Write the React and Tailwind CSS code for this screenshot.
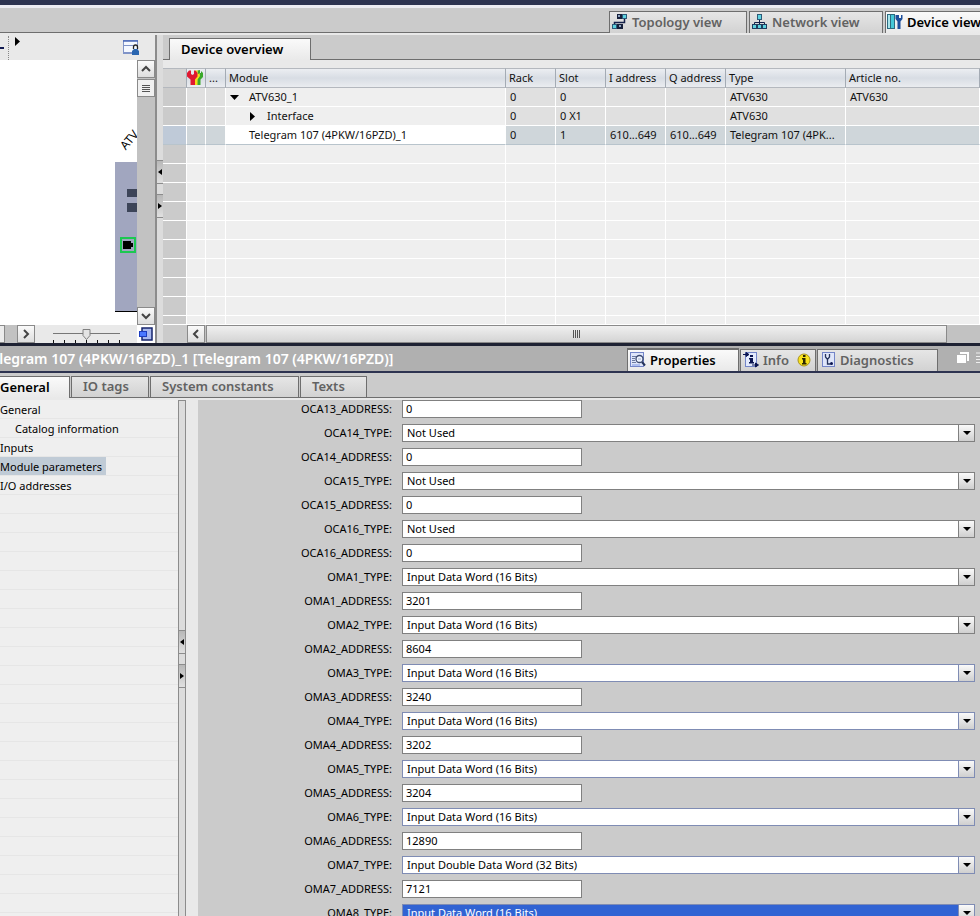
import { useState } from 'react';
import clsx from 'clsx';

const MODULES = [
  { name: 'ATV630_1', level: 0, arrow: 'down', rack: '0', slot: '0', i: '', q: '', type: 'ATV630', article: 'ATV630' },
  { name: 'Interface', level: 1, arrow: 'right', rack: '0', slot: '0 X1', i: '', q: '', type: 'ATV630', article: '' },
  {
    name: 'Telegram 107 (4PKW/16PZD)_1',
    level: 0,
    rack: '0',
    slot: '1',
    i: '610...649',
    q: '610...649',
    type: 'Telegram 107 (4PK...',
    article: '',
  },
];

const TYPES = ['Not Used', 'Input Data Word (16 Bits)', 'Input Double Data Word (32 Bits)'];

const PARAMETERS = [
  { name: 'OCA13_ADDRESS', value: '0' },
  { name: 'OCA14_TYPE', value: TYPES[0] },
  { name: 'OCA14_ADDRESS', value: '0' },
  { name: 'OCA15_TYPE', value: TYPES[0] },
  { name: 'OCA15_ADDRESS', value: '0' },
  { name: 'OCA16_TYPE', value: TYPES[0] },
  { name: 'OCA16_ADDRESS', value: '0' },
  { name: 'OMA1_TYPE', value: TYPES[1] },
  { name: 'OMA1_ADDRESS', value: '3201' },
  { name: 'OMA2_TYPE', value: TYPES[1] },
  { name: 'OMA2_ADDRESS', value: '8604' },
  { name: 'OMA3_TYPE', value: TYPES[1], touched: true },
  { name: 'OMA3_ADDRESS', value: '3240' },
  { name: 'OMA4_TYPE', value: TYPES[1], touched: true },
  { name: 'OMA4_ADDRESS', value: '3202' },
  { name: 'OMA5_TYPE', value: TYPES[1], touched: true },
  { name: 'OMA5_ADDRESS', value: '3204' },
  { name: 'OMA6_TYPE', value: TYPES[1], touched: true },
  { name: 'OMA6_ADDRESS', value: '12890' },
  { name: 'OMA7_TYPE', value: TYPES[2], touched: true },
  { name: 'OMA7_ADDRESS', value: '7121' },
  { name: 'OMA8_TYPE', value: TYPES[1], touched: true, highlighted: true },
];

const SECTIONS = ['General', 'Catalog information', 'Inputs', 'Module parameters', 'I/O addresses'];

function TopologyIcon() {
  return (
    <svg width="16" height="16" viewBox="0 0 16 16" className="shrink-0">
      <path d="M12.5 5v3.500h-10V11" fill="none" stroke="#14204a" strokeWidth="1.500" />
      <rect x="5" y="0" width="6" height="5" fill="#16203c" />
      <rect x="6" y="1" width="2" height="2" fill="#8fa4c0" />
      <rect x="10.5" y="0.500" width="4" height="4" fill="#5fd3e0" stroke="#2c5a78" />
      <rect x="0.5" y="10.500" width="4" height="4" fill="#5fd3e0" stroke="#2c5a78" />
      <rect x="5" y="10" width="6" height="5" fill="#16203c" />
      <rect x="7" y="11" width="2" height="2" fill="#8fa4c0" />
    </svg>
  );
}

function NetworkIcon() {
  return (
    <svg width="16" height="16" viewBox="0 0 16 16" className="shrink-0">
      <path d="M7.500 5v6M2.500 11V8.500h10V11" fill="none" stroke="#14204a" />
      <rect x="5.500" y="0.500" width="4" height="5" fill="#5fd3e0" stroke="#2c5a78" />
      <rect x="0.500" y="10.500" width="4" height="4" fill="#5fd3e0" stroke="#1f3e60" />
      <rect x="5.500" y="10.500" width="4" height="4" fill="#5fd3e0" stroke="#1f3e60" />
      <rect x="10.500" y="10.500" width="4" height="4" fill="#5fd3e0" stroke="#1f3e60" />
    </svg>
  );
}

function DeviceIcon() {
  return (
    <svg width="16" height="16" viewBox="0 0 16 16" className="shrink-0">
      <rect x="0.500" y="0.500" width="3" height="14" fill="#a9e4ea" stroke="#2c6a80" />
      <rect x="3.500" y="0.500" width="4" height="14" fill="#45c8d8" stroke="#2c6a80" />
      <path d="M8.500 1v4l2 2.500V15h3V7.500l2-2.500V1h-1.500v3h-1V4h-1V1z" fill="#1d4f9c" />
    </svg>
  );
}

function PropertiesIcon() {
  return (
    <svg width="16" height="16" viewBox="0 0 16 16" className="shrink-0">
      <rect x="0.500" y="0.500" width="13" height="14" fill="#dfe6fa" stroke="#7385c8" />
      <path d="M2 4.500h5M2 6.500h3M2 8.500h3M2 10.500h4" stroke="#6c7aa0" />
      <circle cx="9.500" cy="7" r="3.500" fill="#eef4ff" stroke="#3c4a70" strokeWidth="1.300" />
      <path d="M8 7h3" stroke="#a0acc8" />
      <path d="M12 10l3 3.500" stroke="#26345c" strokeWidth="2" />
      <path d="M2 13h8" stroke="#7f98e4" />
    </svg>
  );
}

function InfoIcon() {
  return (
    <svg width="16" height="16" viewBox="0 0 16 16" className="shrink-0">
      <rect x="2.500" y="0.500" width="11" height="14" fill="#e3eafc" stroke="#7385c8" />
      <path d="M0 2.500h3M3 0.500l3 2-3 2z" fill="#0a1450" stroke="#0a1450" />
      <path d="M7 3h3v2H7zM6 6h4v4h1v1.500H6V10h1V7.500H6z" fill="#0a1450" />
      <path d="M9 13h4M12.500 11l3 2-3 2z" fill="#0a1450" stroke="#0a1450" />
    </svg>
  );
}

function InfoBadge() {
  return (
    <svg width="14" height="14" viewBox="0 0 14 14" className="shrink-0">
      <circle cx="7" cy="7" r="6" fill="#f8e21c" stroke="#a8921c" />
      <path d="M6 2h2.500v2H6zM5 5h3.500v5h1v1.500H5V10h1V6.500H5z" fill="#2c2800" />
    </svg>
  );
}

function DiagnosticsIcon() {
  return (
    <svg width="14" height="16" viewBox="0 0 14 16" className="shrink-0">
      <rect x="0.500" y="0.500" width="12" height="14" fill="#dfe6fa" stroke="#7385c8" />
      <path d="M3.500 2v3l2 2.500L7.500 5V2M5.500 7v5h3" fill="none" stroke="#26345c" strokeWidth="1.300" />
      <circle cx="9.500" cy="11.500" r="1.500" fill="#0a1450" />
    </svg>
  );
}

function WrenchesIcon() {
  return (
    <svg width="16" height="16" viewBox="0 0 16 16">
      <path d="M10.500 0.500L13 0v3h1V1l2 2v4l-2.500 2.500V15H10z" fill="#3aa82c" />
      <path d="M8 1l2.500-1v3.500l1 .5 1-1 .5 3-2.500 3.500V15H7z" fill="#f4dc18" />
      <path d="M2 0.500L0 3v3.500L3.500 9.500V15H8V9.500l2.500-3V3L8.500 0.500H7V4L5.500 5 4 4V0.500z" fill="#e01830" />
    </svg>
  );
}

function Triangle({ dir, className }) {
  const points = { down: '0,2 9,2 4.5,7', right: '2,0 7,4.5 2,9' };
  return (
    <svg width="9" height="9" viewBox="0 0 9 9" className={clsx('shrink-0', className)}>
      <polygon points={points[dir]} fill="#000" />
    </svg>
  );
}

function Chevron({ d }) {
  return (
    <svg width="10" height="10" viewBox="0 0 10 10">
      <path d={d} fill="none" stroke="#444" strokeWidth="2" />
    </svg>
  );
}

function ScrollButton({ label, children }) {
  return (
    <button
      type="button"
      aria-label={label}
      className="flex h-[18px] w-[18px] shrink-0 items-center justify-center border border-[#8a8a8a] bg-linear-to-b from-[#fafafa] to-[#dedede]"
    >
      {children}
    </button>
  );
}

function Splitter({ className }) {
  return (
    <div
      className={clsx(
        'flex w-2 shrink-0 flex-col items-stretch justify-center gap-2.5 border-[#8c8c8c] bg-[#dcdcdc]',
        className
      )}
    >
      {['left', 'right'].map((dir) => (
        <button
          key={dir}
          type="button"
          aria-label={`Collapse ${dir}`}
          className="flex h-6 items-center justify-center overflow-hidden border-y border-[#8c8c8c] bg-linear-to-b from-[#b8b8b8] to-[#e0e0e0]"
        >
          <svg width="4" height="6" viewBox="0 0 4 6">
            <polygon points={dir === 'left' ? '4,0 0,3 4,6' : '0,0 4,3 0,6'} fill="#000" />
          </svg>
        </button>
      ))}
    </div>
  );
}

function Tab({ active, className, children }) {
  return (
    <button
      type="button"
      className={clsx(
        'flex shrink-0 items-center gap-1 overflow-hidden border border-b-0 border-[#6e6e6e] pb-0.5 text-[13px] leading-4 font-semibold whitespace-nowrap',
        active ? 'bg-linear-to-b from-[#fafafa] to-[#e9e9e9] text-black' : 'bg-linear-to-b from-[#e6e6e6] to-[#d2d2d2] text-[#626262]',
        className
      )}
    >
      {children}
    </button>
  );
}

function ViewBar() {
  return (
    <nav className="flex h-[26px] shrink-0 items-end border-b border-[#e9e9e9] bg-[#cbcbcb]">
      <div className="flex h-full flex-1 border-b border-[#6e6e6e]" />
      <div className="flex items-end gap-0.5 bg-[#cbcbcb]">
        <Tab className="h-[22px] w-[138px] border-b px-0.5">
          <TopologyIcon />
          Topology view
        </Tab>
        <Tab className="h-[22px] w-[134px] border-b px-0.5">
          <NetworkIcon />
          Network view
        </Tab>
        <Tab active className="h-[22px] w-[95px] border-r-0 px-px">
          <DeviceIcon />
          Device view
        </Tab>
      </div>
    </nav>
  );
}

function DeviceCanvas() {
  return (
    <section className="flex w-[155px] shrink-0 flex-col bg-[#e9e9e9]">
      <div className="flex h-[25px] items-center pr-4">
        <span className="h-0.5 w-1 bg-[#101850]" />
        <span className="ml-1 h-6 border-l border-dotted border-[#888]" />
        <Triangle dir="right" className="mb-3 ml-1" />
        <svg width="16" height="15" viewBox="0 0 16 15" className="ml-auto">
          <rect x="0.500" y="0.500" width="14" height="13" fill="#f4f8ff" stroke="#8094c8" />
          <path d="M0 1h15" stroke="#4a68b8" strokeWidth="1.500" />
          <path d="M1 5.500h9M1 12.500h9" stroke="#8094c8" />
          <path d="M10.500 9V7a2 2 0 0 1 4 0v2" fill="none" stroke="#222" strokeWidth="1.300" />
          <path d="M9 15v-4l2-2h3l2 2v4z" fill="#2a66b0" />
        </svg>
      </div>

      <div className="flex flex-1">
        {/* free canvas with the rack */}
        <div className="relative flex-1 overflow-hidden bg-white">
          <span className="absolute top-[72px] left-[119px] -rotate-50 text-xs whitespace-nowrap text-black">ATV</span>
          <div className="absolute top-[102px] left-[115px] h-[150px] w-[22px] border-b border-black bg-[#a1a6bf]">
            <div className="absolute top-[27px] left-3 h-2 w-2.5 bg-[#3c4458]" />
            <div className="absolute top-[41px] left-3 h-[9px] w-2.5 bg-[#3c4458]" />
            <svg width="16" height="16" viewBox="0 0 16 16" className="absolute top-[75px] left-[5px]">
              <rect x="1" y="1" width="14" height="14" fill="#a1a6bf" stroke="#1cc850" strokeWidth="2" />
              <path d="M3 4h8v2h2v4h-2v2H3z" fill="#000" />
            </svg>
          </div>
        </div>
        <div className="flex w-[18px] flex-col bg-[#c2c2c2]">
          <ScrollButton label="Scroll up">
            <Chevron d="M1 7l4-4 4 4" />
          </ScrollButton>
          <div className="mt-px flex h-[18px] flex-col items-center justify-center gap-px border border-[#8a8a8a] bg-[#f0f0f0]">
            <span className="h-px w-2 bg-[#555]" />
            <span className="h-px w-2 bg-[#555]" />
            <span className="h-px w-2 bg-[#555]" />
            <span className="h-px w-2 bg-[#555]" />
          </div>
          <div className="mt-auto flex">
            <ScrollButton label="Scroll down">
              <Chevron d="M1 3l4 4 4-4" />
            </ScrollButton>
          </div>
        </div>
      </div>

      <div className="flex h-[18px] items-stretch">
        <span className="w-[5px] border border-l-0 border-[#8a8a8a] bg-[#ececec]" />
        <span className="w-3 bg-[#c2c2c2]" />
        <ScrollButton label="Scroll right">
          <Chevron d="M3 1l4 4-4 4" />
        </ScrollButton>
        <div className="relative ml-[18px] w-[67px]">
          <svg width="67" height="18" viewBox="0 0 67 18">
            <path d="M0 8.500h67" stroke="#777" />
            <path d="M0.500 15v3M11.500 15v3M22.500 15v3M33.500 15v3M44.500 15v3M55.500 15v3M66.500 15v3" stroke="#111" />
            <path d="M30 4.500h7v6l-3.500 4-3.500-4z" fill="#e4e4e4" stroke="#808080" />
          </svg>
          <input type="range" aria-label="Zoom" defaultValue="50" className="absolute inset-0 h-full w-full opacity-0" />
        </div>
        <div className="ml-auto flex w-[18px] items-center justify-center bg-white">
          <svg width="16" height="16" viewBox="0 0 16 16">
            <rect x="4" y="2" width="10" height="12" fill="#a9b8ec" stroke="#16246c" strokeWidth="1.500" />
            <rect x="1.500" y="5.500" width="7" height="5" fill="#4a78ff" stroke="#1c3cc0" />
          </svg>
        </div>
      </div>
    </section>
  );
}

function DeviceOverview() {
  const headCell = 'border-r border-[#a4abb4] px-[3px] text-left font-normal';
  return (
    <section className="flex min-w-0 flex-1 flex-col bg-[#e9e9e9]">
      <div className="flex h-[25px] items-end bg-[#cbcbcb]">
        <span className="h-full w-1.5 border-b border-[#6e6e6e]" />
        <Tab active className="h-[22px] w-[142px] px-[11px]">
          Device overview
        </Tab>
        <span className="h-full flex-1 border-b border-[#6e6e6e]" />
      </div>

      <table className="mt-2 w-full table-fixed border-separate border-spacing-0 text-[11px] leading-4 text-[#111]">
        <colgroup>
          <col className="w-6" />
          <col className="w-[19px]" />
          <col className="w-5" />
          <col className="w-[280px]" />
          <col className="w-[50px]" />
          <col className="w-[50px]" />
          <col className="w-[60px]" />
          <col className="w-[60px]" />
          <col className="w-[120px]" />
          <col />
        </colgroup>
        <thead>
          <tr className="h-5 bg-linear-to-b from-[#eef0f3] via-[#d8dde4] to-[#eceef1] whitespace-nowrap *:border-y *:border-y-[#b4b8be] *:p-0">
            <th className={clsx(headCell, 'bg-[#d4d4d4]')} aria-label="Row" />
            <th className="border-r border-[#a4abb4]">
              <WrenchesIcon />
            </th>
            <th className={headCell}>
              <span className="pl-[3px]">...</span>
            </th>
            {['Module', 'Rack', 'Slot', 'I address', 'Q address', 'Type', 'Article no.'].map((title) => (
              <th key={title} className={headCell}>
                <span className="pl-[3px]">{title}</span>
              </th>
            ))}
          </tr>
        </thead>
        <tbody>
          {MODULES.map((row, index) => {
            const selected = index === 2;
            return (
              <tr
                key={row.name}
                className={clsx(
                  'h-[19px] whitespace-nowrap *:border-r *:border-b *:border-white *:py-0 *:pr-0 *:pl-1',
                  selected ? 'bg-[#cfd6da] *:border-b-[#b8c4cc]' : 'bg-[#e0e0e0]'
                )}
              >
                <td className={selected ? 'bg-[#bfcad8]' : 'bg-[#cbcbcb]'} />
                <td />
                <td />
                <td className={selected ? 'bg-white' : 'bg-[#efefef]'}>
                  <span className={clsx('flex items-center', row.level === 1 && 'pl-[18px]')}>
                    <span className="flex w-[19px] shrink-0 items-center">
                      {row.arrow && <Triangle dir={row.arrow} />}
                    </span>
                    {row.name}
                  </span>
                </td>
                <td>{row.rack}</td>
                <td>{row.slot}</td>
                <td>{row.i}</td>
                <td>{row.q}</td>
                <td>{row.type}</td>
                <td>{row.article}</td>
              </tr>
            );
          })}
          {Array.from({ length: 10 }, (_, r) => (
            <tr
              key={r}
              className={clsx('bg-[#efefef] *:border-r *:border-b *:border-white *:p-0', r === 9 ? 'h-[9px]' : 'h-[19px]')}
            >
              <td className="bg-[#cbcbcb]" />
              {Array.from({ length: 9 }, (_, c) => (
                <td key={c} />
              ))}
            </tr>
          ))}
        </tbody>
      </table>

      <div className="flex h-[18px] bg-[#c2c2c2]">
        <span className="w-6 bg-[#cbcbcb]" />
        <ScrollButton label="Scroll left">
          <Chevron d="M7 1L3 5l4 4" />
        </ScrollButton>
        <div className="mr-[33px] ml-px flex flex-1 items-center justify-center gap-px border border-[#8a8a8a] bg-linear-to-b from-[#f0f0f0] to-[#d4d4d4]">
          <span className="h-2 w-px bg-[#555]" />
          <span className="h-2 w-px bg-[#555]" />
          <span className="h-2 w-px bg-[#555]" />
          <span className="h-2 w-px bg-[#555]" />
        </div>
      </div>
    </section>
  );
}

function InspectorTitle() {
  return (
    <header className="flex h-[30px] shrink-0 items-end overflow-hidden border-t-3 border-b-2 border-t-[#1e2233] border-b-[#2d3350] bg-[#b0b0b0]">
      <h2 className="-ml-4 flex-1 self-center text-sm leading-4 font-semibold whitespace-nowrap text-white">
        Telegram 107 (4PKW/16PZD)_1 [Telegram 107 (4PKW/16PZD)]
      </h2>
      <div className="flex items-end gap-px">
        <Tab active className="h-[23px] w-[112px] border-t-2 border-[#2d3350] px-0.5">
          <PropertiesIcon />
          Properties
        </Tab>
        <Tab className="h-[22px] w-[76px] px-0.5">
          <InfoIcon />
          Info
          <span className="ml-auto pr-0.5">
            <InfoBadge />
          </span>
        </Tab>
        <Tab className="h-[22px] w-[121px] px-1">
          <DiagnosticsIcon />
          Diagnostics
        </Tab>
      </div>
      <svg width="42" height="22" viewBox="0 0 42 22">
        <path d="M22 3h9v9h-2V5h-7z" fill="#fff" />
        <rect x="19" y="6" width="9" height="8" fill="#fff" />
        <path d="M38 4h4M38 7.500h4M38 10.500h4M38 13.500h4" stroke="#eee" />
      </svg>
    </header>
  );
}

function PropertyTabs() {
  return (
    <nav className="flex h-[27px] shrink-0 items-end border-b-2 border-[#e9e9e9] bg-[#cbcbcb]">
      <Tab active className="h-[22px] w-[70px] border-l-0">
        General
      </Tab>
      <div className="flex flex-1 gap-px border-b border-[#6e6e6e] pl-px">
        <Tab className="h-[21px] w-[78px] px-[11px]">IO tags</Tab>
        <Tab className="h-[21px] w-[149px] px-[11px]">System constants</Tab>
        <Tab className="h-[21px] w-[67px] px-[11px]">Texts</Tab>
      </div>
    </nav>
  );
}

function SectionList() {
  const [current, setCurrent] = useState('Module parameters');
  return (
    <aside className="w-[178px] shrink-0 bg-[#efefef] bg-[repeating-linear-gradient(to_bottom,#efefef_0,#efefef_18px,#e6e6e6_18px,#e6e6e6_19px)] text-[11px] leading-4">
      <ul>
        {SECTIONS.map((name) => (
          <li key={name} className={clsx('flex h-[19px]', name === 'Catalog information' && 'pl-[15px]')}>
            <button
              type="button"
              onClick={() => setCurrent(name)}
              className={clsx('mb-px pt-px pr-1 whitespace-nowrap', current === name && 'bg-[#c0cbd6]')}
            >
              {name}
            </button>
          </li>
        ))}
      </ul>
    </aside>
  );
}

function ParameterRow({ name, value, touched, highlighted }) {
  const isType = name.endsWith('_TYPE');
  return (
    <div className="flex h-[18px] shrink-0 items-center">
      <label htmlFor={name} className="w-[194px] shrink-0 text-right">
        {name}:
      </label>
      {isType ? (
        <div className="relative ml-2.5 h-[18px] flex-1">
          <select
            id={name}
            defaultValue={value}
            className={clsx(
              'block h-full w-full appearance-none border pl-1',
              touched ? 'border-[#7f8cb4]' : 'border-[#808080]',
              highlighted ? 'bg-[#3163d3] text-white' : 'bg-white'
            )}
          >
            {TYPES.map((type) => (
              <option key={type}>{type}</option>
            ))}
          </select>
          <span
            className={clsx(
              'pointer-events-none absolute inset-y-0 right-0 flex w-[17px] items-center justify-center border bg-linear-to-b from-[#fafafa] to-[#cfcfcf]',
              touched ? 'border-[#7f8cb4]' : 'border-[#808080]'
            )}
          >
            <svg width="8" height="4" viewBox="0 0 8 4">
              <polygon points="0,0 8,0 4,4" fill="#000" />
            </svg>
          </span>
        </div>
      ) : (
        <input
          id={name}
          type="text"
          defaultValue={value}
          className="ml-2.5 h-[18px] w-[180px] border border-[#808080] bg-white px-[3px] pb-0.5"
        />
      )}
    </div>
  );
}

export default function App() {
  return (
    <div className="flex h-screen flex-col overflow-hidden bg-[#e9e9e9] font-['Noto_Sans','Open_Sans',sans-serif] text-black">
      <div className="h-2 shrink-0 border-t-5 border-[#2d3350] bg-[#ececf2]" />
      <ViewBar />

      <div className="flex shrink-0 pt-px">
        <DeviceCanvas />
        <Splitter className="border-l-2" />
        <DeviceOverview />
      </div>

      <InspectorTitle />
      <PropertyTabs />

      <div className="flex min-h-0 flex-1">
        <SectionList />
        <Splitter className="border-t border-r border-l" />
        <main className="ml-3 flex min-w-0 flex-1 flex-col gap-1.5 overflow-hidden bg-[#cbcbcb] pr-[5px] text-[11px] leading-4">
          {PARAMETERS.map((param) => (
            <ParameterRow key={param.name} {...param} />
          ))}
        </main>
      </div>
    </div>
  );
}
